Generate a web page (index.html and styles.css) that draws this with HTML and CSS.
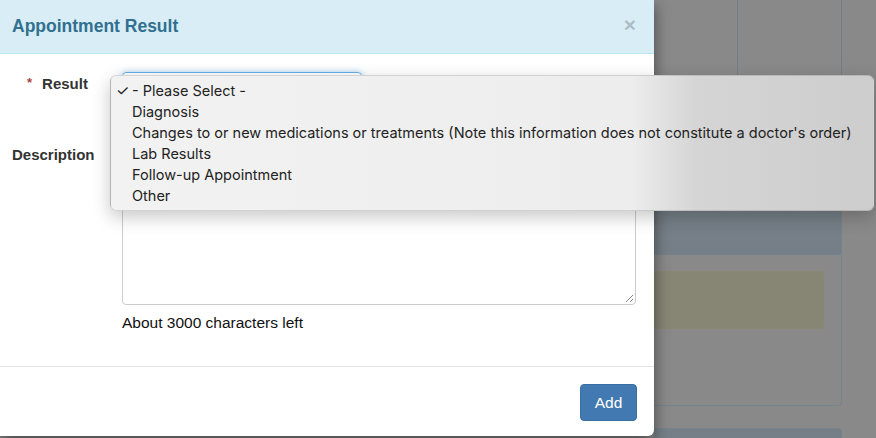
FILE: index.html
```html
<!DOCTYPE html>
<html lang="en">
<head>
    <meta charset="UTF-8">
    <meta name="viewport" content="width=device-width, initial-scale=1.0">
    <title>Appointment Result</title>
    <link rel="stylesheet" href="styles.css">
</head>
<body>
    <div class="screen">
        <!-- Modal dialog -->
        <div class="modal">
            <div class="modal-header">
                <h4 class="modal-title">Appointment Result</h4>
                <span class="close">&times;</span>
            </div>

            <div class="modal-body">
                <div class="form-row">
                    <label class="label required"><span class="star">*</span>Result</label>
                    <div class="select-wrap">
                        <div class="select"></div>

                        <!-- Open native select list -->
                        <ul class="dropdown">
                            <li class="selected">- Please Select -</li>
                            <li>Diagnosis</li>
                            <li>Changes to or new medications or treatments (Note this information does not constitute a doctor's order)</li>
                            <li>Lab Results</li>
                            <li>Follow-up Appointment</li>
                            <li>Other</li>
                        </ul>
                    </div>
                </div>

                <div class="form-row desc-row">
                    <label class="label">Description</label>
                    <div>
                        <div class="textarea"><span class="grip"></span></div>
                        <p class="help">About 3000 characters left</p>
                    </div>
                </div>
            </div>

            <div class="modal-footer">
                <button class="btn">Add</button>
            </div>
        </div>

        <!-- Page behind the backdrop -->
        <div class="behind">
            <div class="table-top">
                <div class="cell"></div>
            </div>
            <div class="panel">
                <div class="panel-heading"></div>
                <div class="panel-body">
                    <div class="alert"></div>
                </div>
            </div>
            <div class="panel next">
                <div class="panel-heading"></div>
            </div>
        </div>
    </div>
</body>
</html>
```

FILE: styles.css
```css
/* General */
body {
    margin: 0;
    font-family: 'Liberation Sans', Arial, sans-serif;
    background: #898989;
    color: #222;
}

.screen {
    display: flex;
    width: 876px;
    height: 438px;
    overflow: hidden;
    position: relative;
}

/* Modal */
.modal {
    width: 654px;
    flex-shrink: 0;
    height: 436px;
    background: #fff;
    border-radius: 0 0 6px 0;
    box-shadow: 0 5px 15px rgba(0, 0, 0, 0.5);
    display: flex;
    flex-direction: column;
    position: relative;
    z-index: 2;
}

.modal-header {
    height: 53px;
    background: #d9edf7;
    border-bottom: 1px solid #bce8f1;
    display: flex;
    align-items: center;
    justify-content: space-between;
    padding: 0 18px 0 12px;
}

.modal-title {
    margin: 0;
    font-size: 17.5px;
    font-weight: bold;
    color: #31708f;
}

.close {
    font-size: 21px;
    font-weight: bold;
    color: #000;
    opacity: 0.2;
    line-height: 1;
    margin-top: -4px;
}

.modal-body {
    flex: 1;
    padding: 18px 18px 0 12px;
}

.form-row {
    display: grid;
    grid-template-columns: 110px 1fr;
}

.label {
    font-size: 15px;
    font-weight: bold;
    color: #333;
    padding-top: 3px;
}

.required {
    padding-left: 15px;
}

.star {
    color: #a94442;
    font-size: 13px;
    margin-right: 10px;
    position: relative;
    top: -2px;
}

.select-wrap {
    position: relative;
}

.select {
    width: 238px;
    height: 32px;
    border: 1px solid #66afe9;
    border-radius: 4px;
    box-shadow: 0 0 6px rgba(102, 175, 233, 0.6);
}

.desc-row {
    margin-top: 32px;
}

.desc-row .label {
    padding-top: 8px;
}

.textarea {
    height: 165px;
    border: 1px solid #ccc;
    border-radius: 4px;
    position: relative;
}

.grip {
    position: absolute;
    right: 2px;
    bottom: 2px;
    width: 7px;
    height: 7px;
    background: linear-gradient(135deg, transparent 45%, #888 45%, #888 52%, transparent 52%, transparent 72%, #888 72%, #888 79%, transparent 79%);
}

.help {
    margin: 8px 0 0;
    font-size: 15.5px;
    color: #111;
    line-height: 20px;
}

.modal-footer {
    height: 70px;
    border-top: 1px solid #e5e5e5;
    display: flex;
    justify-content: flex-end;
    align-items: flex-start;
    padding: 17px 17px 0;
    box-sizing: border-box;
}

.btn {
    width: 57px;
    height: 37px;
    background: #4379b1;
    border: 1px solid #3a6ea3;
    border-radius: 4px;
    color: #fff;
    font-family: 'Liberation Sans', Arial, sans-serif;
    font-size: 15.5px;
}

/* Native select list */
.dropdown {
    position: absolute;
    left: -12px;
    top: 3px;
    width: 764px;
    margin: 0;
    padding: 4px 0 4px;
    list-style: none;
    box-sizing: border-box;
    border-radius: 6px;
    border: 1px solid rgba(0, 0, 0, 0.12);
    background: linear-gradient(to right, #f2f2f2 0, #ededed 520px, #d5d5d5 585px, #cdcdcd 100%);
    box-shadow: 0 6px 18px rgba(0, 0, 0, 0.22);
    font-family: 'Inter', 'Noto Sans', sans-serif;
    font-size: 14.5px;
    color: #222;
    z-index: 5;
}

.dropdown li {
    height: 21px;
    line-height: 21px;
    padding-left: 21px;
    position: relative;
    white-space: nowrap;
}

.dropdown .selected::before {
    content: "\2713";
    position: absolute;
    left: 5px;
    font-size: 15px;
}

/* Backdrop page */
.behind {
    flex: 1;
    padding-right: 34px;
}

.table-top {
    height: 130px;
    display: flex;
    border-right: 1px solid #727d86;
}

.table-top .cell {
    width: 83px;
    border-right: 1px solid #727d86;
}

.panel {
    border: 1px solid #75838c;
    border-left: none;
    border-radius: 0 4px 4px 0;
    height: 274px;
}

.panel-heading {
    height: 123px;
    background: #767f87;
    border-bottom: 1px solid #75838c;
}

.panel-body {
    padding: 16px 17px 0 0;
}

.alert {
    height: 56px;
    background: #878574;
    border: 1px solid #8a8771;
    border-left: none;
    border-radius: 0 4px 4px 0;
}

.panel.next {
    margin-top: 22px;
    height: 40px;
}

.panel.next .panel-heading {
    border-bottom: none;
}
```
